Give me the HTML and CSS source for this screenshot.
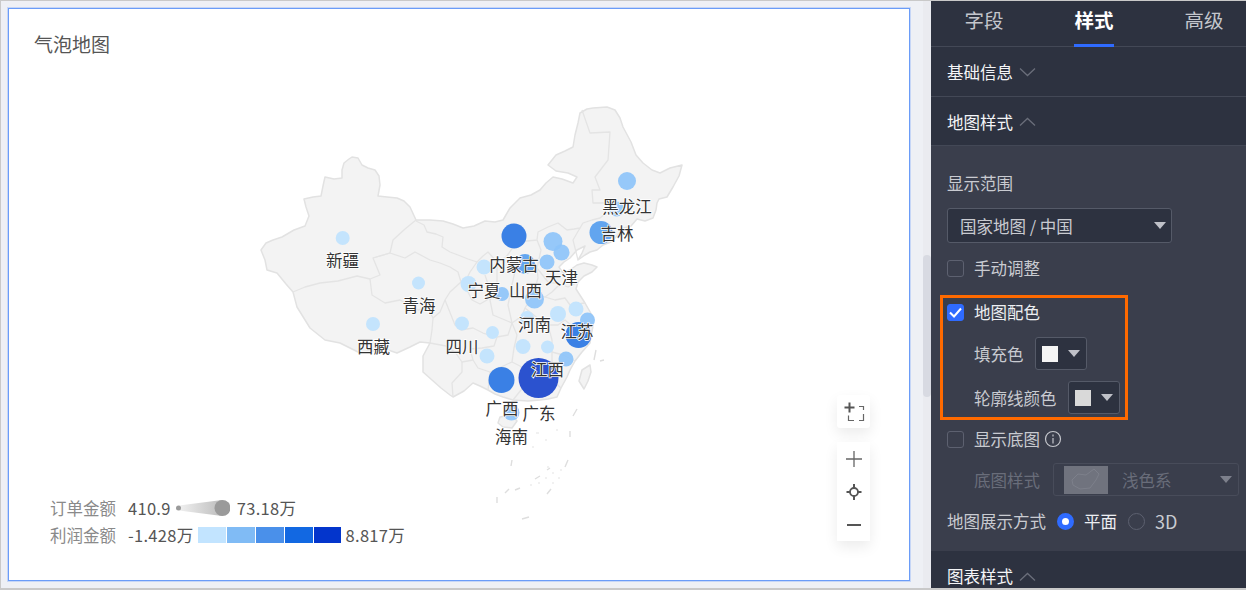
FILE: index.html
```html
<!DOCTYPE html>
<html lang="zh">
<head>
<meta charset="utf-8">
<title>气泡地图</title>
<link rel="stylesheet" href="styles.css">
</head>
<body>
<div class="app">
  <main class="stage">
    <section class="card">
      <h1 class="card-title">气泡地图</h1>
      <svg class="map" viewBox="9 9 900 571" xmlns="http://www.w3.org/2000/svg">
        <path class="land" d="M352 157 358 158 362 165 368 168 375 170 379 176 380 185 378 196 387 197 397 198 404 201 410 207 416 220 430 220 443 221 453 224 463 228 474 226 485 221 495 222 503 220 510 208 520 198 531 195 540 190 546 183 553 177 562 179 573 183 577 177 568 173 556 171 548 165 556 155 565 151 573 147 575 135 578 123 580 113 587 109 593 108 607 107 615 110 620 118 623 127 631 142 636 155 643 163 652 170 660 173 670 168 682 165 679 176 673 187 667 197 659 199 657 203 656 210 653 218 645 221 637 219 631 226 624 228 617 236 611 242 603 245 597 250 590 252 585 255 578 260 582 253 585 246 577 250 570 258 564 262 559 267 563 273 570 270 577 265 584 263 592 265 597 267 592 272 584 276 578 282 576 289 585 303 593 317 593 326 591 336 590 343 582 352 575 361 570 370 567 377 561 388 557 397 548 399 540 400 528 401 513 400 503 397 495 394 488 390 480 386 473 383 464 391 453 397 450 395 441 388 432 380 423 372 423 356 430 343 420 342 410 347 397 353 385 349 372 351 358 352 340 343 325 340 310 328 297 307 293 292 286 284 277 273 267 270 265 260 261 250 266 243 273 240 282 237 294 230 305 226 309 216 306 207 304 199 313 197 321 196 323 186 325 177 334 179 342 178 342 170 344 163 349 159Z"/>
        <path class="land" d="M582 370 590 365 591 372 588 381 584 389 579 381Z"/>
        <path class="land" d="M500 417 512 415 517 421 512 428 503 427 498 423Z"/>
        <path class="border" d="M293 292 305 287 320 283 338 281 357 276 370 279 380 275 373 258 390 253 393 240 405 229 416 220"/>
        <path class="border" d="M370 279 372 295 385 303 400 300 418 310 428 308 433 318 432 330 430 343"/>
        <path class="border" d="M373 258 390 253 405 258 415 252 430 260 440 263 450 267 458 272 461 282 450 292 445 300 440 312 433 318"/>
        <path class="border" d="M416 221 424 225 427 232 436 234 443 237 442 247 450 252 458 255 468 259 477 262 483 256 488 252 497 262 506 257 517 242 527 241 537 240 538 232 548 227 558 223 567 230 574 229 580 228 583 223 592 220 600 218 606 213 612 208 607 203 593 203 592 190 600 190 595 177 608 160 610 132 590 133 582 110"/>
        <path class="border" d="M477 262 470 272 465 282 468 292 472 300 480 304 487 300 490 290 485 275"/>
        <path class="border" d="M497 262 497 285 490 300 493 315 505 320 512 323 508 335 497 337 483 333 473 328 461 330 455 325 445 300"/>
        <path class="border" d="M517 262 512 285 508 305 512 323 522 316 525 308 533 295 538 278 537 268 530 258 517 262"/>
        <path class="border" d="M537 240 541 250 537 268 548 282 560 284 552 292 545 297 533 295"/>
        <path class="border" d="M560 284 568 287 578 282"/>
        <path class="border" d="M545 297 555 300 565 298 570 305 585 303"/>
        <path class="border" d="M525 308 540 320 548 325 558 325 565 320 572 326 590 336"/>
        <path class="border" d="M548 325 552 340 552 352 563 355 575 361"/>
        <path class="border" d="M512 323 517 335 514 348 512 362 520 366 527 372 540 368 552 362 552 352"/>
        <path class="border" d="M497 337 494 346 482 348 470 349 473 360 462 362 455 352 446 346 430 343"/>
        <path class="border" d="M473 360 478 368 490 372 512 362"/>
        <path class="border" d="M453 397 452 383 462 372 462 362"/>
        <path class="border" d="M490 372 488 390"/>
        <path class="border" d="M527 372 525 385 513 400"/>
        <path class="border" d="M540 368 548 376 561 388"/>
        <path class="border" d="M578 260 573 240 580 228"/>
        <path class="isles" d="M573 416 577 409M570 431V437M568 460 565 467M512 460 511 466M497 497V503M522 519 529 517M551 489 547 494M509 489 505 493M600 361 604 360M596 350 594 360M550 468 547 470M540 476 535 479M520 488 515 490"/>
        <path class="dots" d="M536 433H539M545 440H547M556 430H558M547 467H549M552 473H554M558 478H560M545 478H547M538 483H540M530 485H532M552 483H554M560 470H562M532 447H534M545 412H547"/>
        <g>
          <circle class="b-pale" cx="342.700" cy="238" r="7"/>
          <circle class="b-pale" cx="418.500" cy="283" r="6.500"/>
          <circle class="b-pale" cx="373" cy="324" r="7"/>
          <circle class="b-pale" cx="462" cy="323.500" r="7"/>
          <circle class="b-pale" cx="484" cy="267" r="7.500"/>
          <circle class="b-pale" cx="468.500" cy="284" r="8"/>
          <circle class="b-pale" cx="492.500" cy="332.500" r="6.500"/>
          <circle class="b-pale" cx="487" cy="356" r="7.500"/>
          <circle class="b-pale" cx="523" cy="346.500" r="7.500"/>
          <circle class="b-pale" cx="547.500" cy="347" r="6.500"/>
          <circle class="b-pale" cx="558" cy="314" r="8"/>
          <circle class="b-pale" cx="576" cy="309" r="7.500"/>
          <circle class="b-pale" cx="527" cy="318" r="7"/>
          <circle class="b-light" cx="627" cy="181" r="9"/>
          <circle class="b-light" cx="616.500" cy="209" r="7.500"/>
          <circle class="b-light" cx="553" cy="241.500" r="9.500"/>
          <circle class="b-light" cx="561.500" cy="252.500" r="8"/>
          <circle class="b-light" cx="547" cy="262" r="7.500"/>
          <circle class="b-light" cx="502" cy="294" r="7"/>
          <circle class="b-light" cx="534.500" cy="299" r="9.500"/>
          <circle class="b-light" cx="587.500" cy="320" r="7.500"/>
          <circle class="b-light" cx="566" cy="359" r="7.500"/>
          <circle class="b-light" cx="511.500" cy="412.500" r="8"/>
          <circle class="b-mid" cx="601" cy="232.500" r="11.500"/>
          <circle class="b-mid" cx="525" cy="264" r="10"/>
          <circle class="b-strong" cx="514" cy="236" r="12.500"/>
          <circle class="b-strong" cx="501.500" cy="380" r="13"/>
          <circle class="b-strong" cx="578.500" cy="335" r="13"/>
          <circle class="b-deep" cx="538.500" cy="378" r="20"/>
        </g>
        <g class="labels">
          <text x="342.500" y="267">新疆</text>
          <text x="419" y="312">青海</text>
          <text x="373.500" y="353">西藏</text>
          <text x="462" y="353">四川</text>
          <text x="514" y="271">内蒙古</text>
          <text x="484" y="297">宁夏</text>
          <text x="525.500" y="297">山西</text>
          <text x="561.500" y="284">天津</text>
          <text x="627" y="213">黑龙江</text>
          <text x="617" y="240">吉林</text>
          <text x="534.500" y="331">河南</text>
          <text x="577" y="338">江苏</text>
          <text x="547.500" y="376">江西</text>
          <text x="502" y="415">广西</text>
          <text x="539" y="420">广东</text>
          <text x="511.500" y="443">海南</text>
        </g>
      </svg>

      <div class="legend">
        <div class="legend-row">
          <span class="legend-name">订单金额</span>
          <span class="legend-val">410.9</span>
          <svg class="cone" width="55" height="20" viewBox="0 0 55 20">
            <defs>
              <linearGradient id="coneFill" x1="0" x2="1" y1="0" y2="0">
                <stop offset="0" stop-color="#f0f0f0"/>
                <stop offset="1" stop-color="#bdbdbd"/>
              </linearGradient>
            </defs>
            <path d="M4 7.500 47 2V18L4 12.500Z" fill="url(#coneFill)"/>
            <circle cx="3.500" cy="10" r="2.500" fill="#9a9a9a"/>
            <circle cx="47.500" cy="10" r="8" fill="#9a9a9a"/>
          </svg>
          <span class="legend-val">73.18万</span>
        </div>
        <div class="legend-row">
          <span class="legend-name">利润金额</span>
          <span class="legend-val">-1.428万</span>
          <span class="scale">
            <i class="s1"></i><i class="s2"></i><i class="s3"></i><i class="s4"></i><i class="s5"></i>
          </span>
          <span class="legend-val">8.817万</span>
        </div>
      </div>

      <div class="map-tools">
        <button class="tool-box single" type="button" aria-label="框选放大">
          <svg width="24" height="24" viewBox="0 0 24 24"><path class="ico-bold" d="M2.500 7.500H12.500M7.500 2.500V12.500"/><path class="ico-thin" d="M17 6.500H21.500V10M21.500 14V20.500H17M12 20.500H6.500V15.500"/></svg>
        </button>
        <div class="tool-box group">
          <button class="tool" type="button" aria-label="放大"><svg width="18" height="18" viewBox="0 0 18 18"><path class="ico" d="M1 9H17M9 1V17"/></svg></button>
          <button class="tool" type="button" aria-label="定位"><svg width="18" height="18" viewBox="0 0 18 18"><circle class="ico-bold-c" cx="9" cy="9" r="4"/><path class="ico-bold" d="M9 1V5M9 13V17M1.500 9H5M13 9H16.500"/></svg></button>
          <button class="tool" type="button" aria-label="缩小"><svg width="18" height="18" viewBox="0 0 18 18"><path class="ico-bold" d="M2 9H16"/></svg></button>
        </div>
      </div>
    </section>
  </main>

  <div class="scrolltrack"><div class="scrollthumb"></div></div>

  <aside class="panel">
    <nav class="tabs">
      <span class="tab">字段</span>
      <span class="tab active">样式</span>
      <span class="tab">高级</span>
    </nav>

    <div class="section-head first">
      <span>基础信息</span>
      <svg class="chev" width="17" height="10" viewBox="0 0 17 10"><path d="M1 1.500 8.500 8.500 16 1.500"/></svg>
    </div>
    <div class="section-head second">
      <span>地图样式</span>
      <svg class="chev" width="17" height="10" viewBox="0 0 17 10"><path d="M1 8.500 8.500 1.500 16 8.500"/></svg>
    </div>

    <div class="section-body">
      <div class="row label-row">显示范围</div>
      <div class="select wide"><span>国家地图 / 中国</span><i class="caret"></i></div>
      <label class="row check-row after-select"><i class="check"></i>手动调整</label>

      <div class="highlight">
        <div class="check-row first-check"><i class="check on"><svg width="13" height="11" viewBox="0 0 13 11"><path d="M1 5.500 5 9.500 12 1.500"/></svg></i><span class="bright">地图配色</span></div>
        <div class="color-row"><span>填充色</span><div class="select swatch"><i class="chip fill"></i><i class="caret"></i></div></div>
        <div class="color-row"><span>轮廓线颜色</span><div class="select swatch"><i class="chip line"></i><i class="caret"></i></div></div>
      </div>

      <div class="row check-row after-box"><i class="check"></i>显示底图
        <svg class="info" width="18" height="18" viewBox="0 0 18 18"><circle cx="9" cy="9" r="7.500"/><path d="M9 8V13.500M9 4.500V6.500"/></svg>
      </div>

      <div class="disabled-row">
        <span class="dim">底图样式</span>
        <div class="select base">
          <span class="thumb"><svg width="44" height="28" viewBox="0 0 44 28"><path d="M8 14 14 8 22 9 30 3 35 8 32 14 26 22 16 23 9 19Z"/></svg></span>
          <span class="dim base-name">浅色系</span><i class="caret dim-caret"></i>
        </div>
      </div>

      <div class="row radio-row">
        <span>地图展示方式</span>
        <i class="radio on"></i><span class="bright radio-text">平面</span>
        <i class="radio"></i><span class="radio-text radio-3d">3D</span>
      </div>
    </div>

    <div class="section-head third">
      <span>图表样式</span>
      <svg class="chev" width="17" height="10" viewBox="0 0 17 10"><path d="M1 8.500 8.500 1.500 16 8.500"/></svg>
    </div>
  </aside>
</div>
</body>
</html>
```
FILE: styles.css
```css
* { box-sizing: border-box; }
html, body { margin: 0; height: 100%; overflow: hidden; }
body { font-family: "Noto Sans CJK SC", "Noto Sans", sans-serif; background: #eef0f5; }

.app {
  display: flex;
  height: 590px;
  border: 1px solid #c9c9c9;
  border-right: 0;
  border-bottom-width: 2px;
}
.stage { width: 922px; padding: 7px 0 0 7px; flex: none; }
.card {
  position: relative;
  width: 902px;
  height: 573px;
  background: #fff;
  border: 1px solid #6a9cf8;
  box-shadow: 0 0 0 1px rgba(106, 156, 248, .3);
}
.card-title {
  margin: 0;
  padding: 21px 0 0 25px;
  font-size: 19px;
  line-height: 28px;
  font-weight: 400;
  color: #555;
}
.map { position: absolute; left: 0; top: 0; width: 900px; height: 571px; }
.land { fill: #f3f3f3; stroke: #e2e2e2; stroke-width: 1.5; stroke-linejoin: round; }
.border { fill: none; stroke: #e4e4e4; stroke-width: 1.3; stroke-linejoin: round; }
.isles { fill: none; stroke: #dedede; stroke-width: 1.4; }
.dots { fill: none; stroke: #e4e4e4; stroke-width: 1.2; }
.b-pale { fill: #c4e4fd; }
.b-light { fill: #8cc3f9; fill-opacity: .9; }
.b-mid { fill: #62a5ef; }
.b-strong { fill: #3a80e5; }
.b-deep { fill: #2b52cf; }
.labels text {
  font-size: 16.500px;
  fill: #333;
  text-anchor: middle;
  stroke: #fff;
  stroke-width: 1.500px;
  paint-order: stroke;
}

.legend {
  position: absolute;
  left: 41px;
  top: 487px;
  display: flex;
  flex-direction: column;
  gap: 3px;
  font-size: 16.500px;
  line-height: 24px;
}
.legend-row { display: flex; align-items: center; height: 24px; }
.legend-name { width: 78px; color: #8a8a8a; flex: none; }
.legend-val { color: #555; white-space: nowrap; letter-spacing: .3px; }
.cone { margin: 0 7px 0 4px; flex: none; }
.scale { display: flex; gap: 1px; margin: 0 5px 0 4px; }
.scale i { display: block; width: 28px; height: 16px; }
.scale .s1 { background: #c2e4ff; }
.scale .s2 { background: #80bbf5; }
.scale .s3 { background: #4a90ea; }
.scale .s4 { background: #1268e2; }
.scale .s5 { background: #0335cc; width: 27px; }

.map-tools {
  position: absolute;
  left: 828px;
  top: 386px;
  display: flex;
  flex-direction: column;
  gap: 14px;
}
.tool-box {
  background: #fff;
  border: 0;
  padding: 0;
  width: 33px;
  box-shadow: 0 6px 14px rgba(0, 0, 0, .08);
}
.single { height: 33px; display: flex; align-items: center; justify-content: center; border-radius: 3px; }
.group { height: 99px; display: flex; flex-direction: column; }
.tool { height: 33px; border: 0; padding: 0; background: none; display: flex; align-items: center; justify-content: center; }
.ico { fill: none; stroke: #666; stroke-width: 1.300; }
.ico-bold { fill: none; stroke: #555; stroke-width: 2; }
.ico-bold-c { fill: none; stroke: #555; stroke-width: 1.800; }
.ico-thin { fill: none; stroke: #666; stroke-width: 1.200; }

.scrolltrack { width: 8px; position: relative; flex: none; background: #eaebf0; }
.scrollthumb { margin-top: 254px; height: 142px; border-radius: 4px; background: #d8dae2; }

.panel {
  width: 315px;
  flex: none;
  display: flex;
  flex-direction: column;
  background: #2d3240;
  color: #c9cbd1;
  font-size: 16.500px;
  overflow: hidden;
}
.tabs {
  display: flex;
  gap: 70px;
  height: 46px;
  padding-left: 33px;
  border-bottom: 1px solid #434856;
  flex: none;
}
.tab {
  width: 40px;
  font-size: 19.500px;
  line-height: 38px;
  text-align: center;
  white-space: nowrap;
  color: #c4c6cc;
}
.tab.active {
  color: #fff;
  font-weight: 700;
  border-bottom: 3px solid #2f6bff;
  height: 46px;
}
.section-head {
  display: flex;
  align-items: center;
  gap: 6px;
  padding-left: 16px;
  height: 50px;
  color: #f4f5f7;
  flex: none;
  border-bottom: 1px solid #434856;
}
.second { height: 49px; padding-top: 1px; }
.third { border-bottom: 0; height: 50px; align-items: flex-start; padding-top: 13px; }
.third .chev { margin-top: 8px; }
.chev { fill: none; stroke: #6a6e7a; stroke-width: 1.300; flex: none; }

.section-body {
  height: 405px;
  padding: 20px 0 0 16px;
  background: #3a3e4c;
  flex: none;
}
.row { display: flex; align-items: center; height: 34px; }
.label-row { margin-bottom: 8px; }
.select {
  display: flex;
  align-items: center;
  background: #2d3240;
  border: 1px solid #555a68;
  border-radius: 3px;
  position: relative;
}
.wide { width: 225px; height: 35px; padding-left: 12px; color: #c9cbd1; }
.caret {
  position: absolute;
  right: 6px;
  top: 50%;
  margin-top: -4px;
  width: 0;
  height: 0;
  border-left: 6px solid transparent;
  border-right: 6px solid transparent;
  border-top: 7px solid #bfc1c8;
}
.wide .caret { right: 5px; }
.check-row { display: flex; align-items: center; gap: 10px; }
.after-select { margin-top: 8px; }
.check {
  width: 17px;
  height: 17px;
  flex: none;
  border: 1px solid #5d6170;
  border-radius: 3px;
  display: flex;
  align-items: center;
  justify-content: center;
}
.check.on { background: #2f6bff; border-color: #2f6bff; }
.check svg { fill: none; stroke: #fff; stroke-width: 2; }

.highlight {
  width: 188px;
  height: 125px;
  margin: 10px 0 0 -7px;
  padding: 0 0 0 4px;
  border: 3px solid #ff6a00;
}
.first-check { height: 28px; margin-bottom: 11px; }
.bright { color: #eceef2; }
.color-row { display: flex; align-items: center; gap: 11.500px; padding-left: 27px; margin-bottom: 11px; }
.swatch { width: 52px; height: 33px; padding-left: 6px; }
.chip { width: 16px; height: 16px; display: block; }
.chip.fill { background: #f5f5f5; }
.chip.line { background: #d9d9d9; }

.after-box { margin-top: 2px; gap: 10px; }
.info { fill: none; stroke: #c4c6cc; stroke-width: 1.200; margin-left: -6px; flex: none; }

.disabled-row { display: flex; align-items: center; margin-top: 7px; padding-left: 27px; }
.dim { color: #696d7a; }
.base { width: 186px; height: 33px; margin-left: 13px; background: transparent; border-color: #484c5a; padding-left: 10px; }
.thumb { width: 44px; height: 28px; display: block; background: #70737e; flex: none; }
.thumb svg { display: block; fill: none; stroke: #7d808b; stroke-width: 1; }
.base-name { margin-left: 14px; }
.dim-caret { border-top-color: #7d808c; right: 6px; }

.radio-row { margin-top: 8px; }
.radio {
  width: 17px;
  height: 17px;
  border-radius: 50%;
  border: 1px solid #5d6170;
  flex: none;
}
.radio.on { background: #fff; border: 5px solid #2f6bff; margin-left: 11px; }
.radio-text { margin-left: 10px; margin-right: 11px; }
.radio-3d { font-size: 18px; }
```
